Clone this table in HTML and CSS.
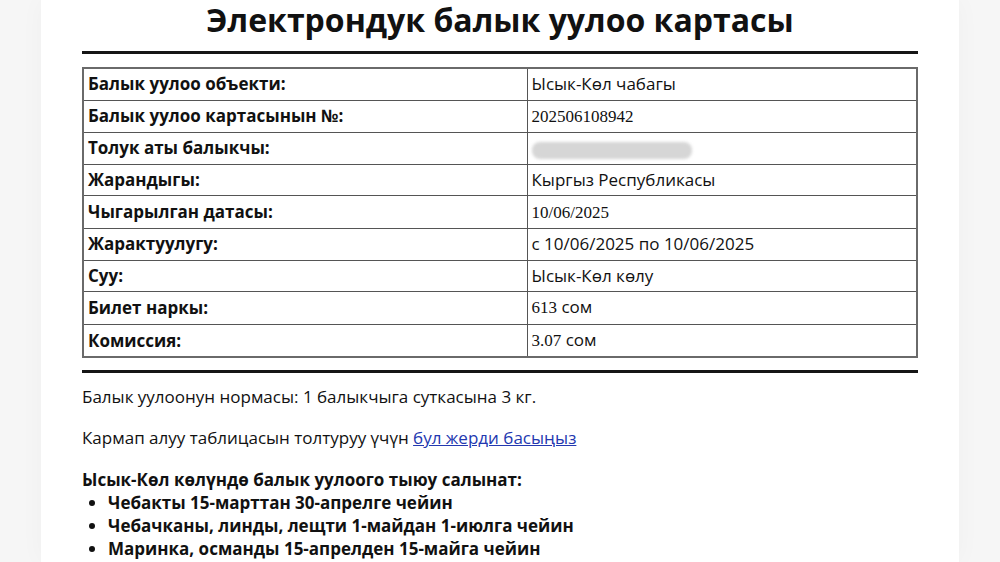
FILE: index.html
```html
<!DOCTYPE html>
<html lang="ky">
<head>
    <meta charset="UTF-8">
    <meta name="viewport" content="width=device-width, initial-scale=1.0">
    <title>Электрондук балык уулоо картасы</title>
    <link rel="stylesheet" href="styles.css">
</head>
<body>
    <div class="page">
        <h1>Электрондук балык уулоо картасы</h1>
        <hr class="rule">

        <table class="card-table">
            <tr>
                <td class="label">Балык уулоо объекти:</td>
                <td>Ысык-Көл чабагы</td>
            </tr>
            <tr>
                <td class="label">Балык уулоо картасынын №:</td>
                <td><span class="num">202506108942</span></td>
            </tr>
            <tr>
                <td class="label">Толук аты балыкчы:</td>
                <td><span class="redacted"></span></td>
            </tr>
            <tr>
                <td class="label">Жарандыгы:</td>
                <td>Кыргыз Республикасы</td>
            </tr>
            <tr>
                <td class="label">Чыгарылган датасы:</td>
                <td><span class="num">10/06/2025</span></td>
            </tr>
            <tr>
                <td class="label">Жарактуулугу:</td>
                <td>с 10/06/2025 по 10/06/2025</td>
            </tr>
            <tr>
                <td class="label">Суу:</td>
                <td>Ысык-Көл көлу</td>
            </tr>
            <tr>
                <td class="label">Билет наркы:</td>
                <td><span class="num">613</span> сом</td>
            </tr>
            <tr>
                <td class="label">Комиссия:</td>
                <td><span class="num">3.07</span> сом</td>
            </tr>
        </table>

        <hr class="rule rule-bottom">

        <p class="note">Балык уулоонун нормасы: 1 балыкчыга суткасына 3 кг.</p>
        <p class="note">Кармап алуу таблицасын толтуруу үчүн <a href="#">бул жерди басыңыз</a></p>

        <p class="ban-title">Ысык-Көл көлүндө балык уулоого тыюу салынат:</p>
        <ul class="ban-list">
            <li>Чебакты 15-марттан 30-апрелге чейин</li>
            <li>Чебачканы, линды, лещти 1-майдан 1-июлга чейин</li>
            <li>Маринка, османды 15-апрелден 15-майга чейин</li>
        </ul>
    </div>
</body>
</html>
```

FILE: styles.css
```css
* {
    box-sizing: border-box;
    margin: 0;
    padding: 0;
}

body {
    font-family: 'Open Sans', 'Noto Sans', sans-serif;
    font-size: 17px;
    background: #f6f6f6;
    color: #111;
}

.page {
    width: 918px;
    min-height: 100vh;
    margin: 0 auto;
    padding: 0 41px;
    background: white;
    box-shadow: 0 0 24px rgba(0, 0, 0, 0.03);
}

h1 {
    font-size: 32px;
    line-height: 40px;
    font-weight: 700;
    text-align: center;
    color: #111;
}

.rule {
    border: none;
    height: 3px;
    background: #151515;
    margin-top: 11px;
}

.rule-bottom {
    margin-top: 12px;
}

.card-table {
    width: 100%;
    margin-top: 13px;
    border-collapse: collapse;
    border: 2px solid #6a6a6a;
}

.card-table td {
    border: 1.5px solid #555;
    padding: 4.3px 4px;
    line-height: 22px;
    vertical-align: middle;
}

.card-table td.label {
    width: 444px;
    font-weight: 700;
}

.num {
    font-family: 'Liberation Serif', 'Times New Roman', serif;
}

.redacted {
    display: inline-block;
    width: 160px;
    height: 17px;
    margin-top: 2px;
    vertical-align: middle;
    background: #d6d6d6;
    border-radius: 8px;
    filter: blur(1.5px);
}

.note {
    line-height: 24px;
    margin-top: 12px;
}

.note + .note {
    margin-top: 17px;
}

.note a {
    color: #2338b0;
}

.ban-title {
    font-weight: 700;
    line-height: 23px;
    margin-top: 18px;
}

.ban-list {
    font-weight: 700;
    line-height: 23px;
    padding-left: 26px;
}
```
